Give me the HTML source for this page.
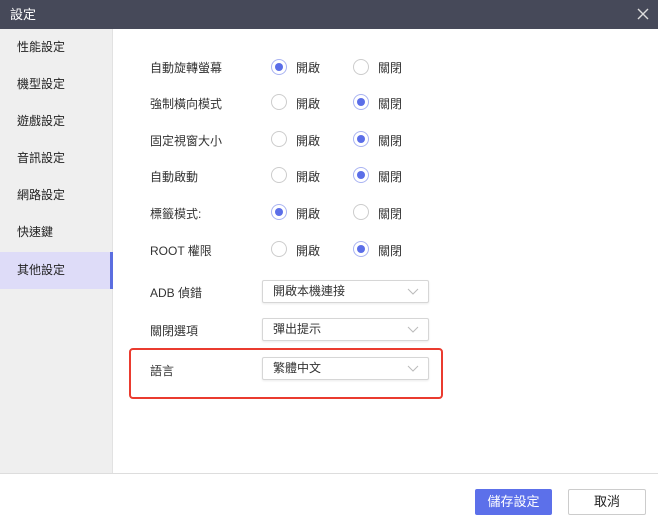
<!DOCTYPE html><html><head><meta charset="utf-8"><style>
*{box-sizing:border-box;margin:0;padding:0}
body{width:658px;height:523px;overflow:hidden;background:#fff;font-family:"Liberation Sans","Noto Sans CJK TC",sans-serif;font-size:12px;color:#333;position:relative}
.tb{position:absolute;left:0;top:0;width:658px;height:29px;background:#464959;color:#fff;font-size:13px;line-height:29px;padding-left:10px}
.x{position:absolute;right:8px;top:7px;width:14px;height:14px}
.sb{position:absolute;left:0;top:29px;width:113px;height:444px;background:#efefef;border-right:1px solid #e2e2e2}
.it{position:absolute;left:0;width:113px;height:37px;line-height:37px;padding-left:17px;font-size:12px;color:#222}
.act{background:#dedcf8;border-right:3px solid #5b6ee0}
.lb{position:absolute;left:150px;font-size:12px;color:#333}
.r{position:absolute;width:16px;height:16px;border-radius:50%;border:1px solid #ccc;background:#fff}
.r.on{border:1px solid #aab4f2}
.r.on::after{content:"";position:absolute;left:3px;top:3px;width:8px;height:8px;border-radius:50%;background:#5b6ee8}
.rt{position:absolute;font-size:12px;color:#333}
.sel{position:absolute;left:262px;width:167px;height:23px;border:1px solid #d6d6d6;border-radius:2px;background:#fff;line-height:21px;padding-left:10px;box-shadow:0 1px 2px rgba(0,0,0,.08)}
.sel svg{position:absolute;right:9px;top:7px}
.red{position:absolute;left:129px;top:348px;width:314px;height:51px;border:2px solid #ea3b2f;border-radius:4px}
.ft{position:absolute;left:0;top:473px;width:658px;height:50px;border-top:1px solid #ddd;background:#fff}
.b1{position:absolute;left:475px;top:489px;width:77px;height:26px;background:#5c70ea;color:#fff;border-radius:2px;text-align:center;line-height:26px;font-size:13px}
.b2{position:absolute;left:568px;top:489px;width:78px;height:26px;border:1px solid #ccc;border-radius:2px;text-align:center;line-height:24px;font-size:13px;color:#222;background:#fff}
</style></head><body>
<div class="tb">設定<svg class="x" viewBox="0 0 14 14"><path d="M2 2L12 12M12 2L2 12" stroke="#ddd" stroke-width="1.4"/></svg></div>
<div class="sb">
<div class="it" style="top:0">性能設定</div>
<div class="it" style="top:37px">機型設定</div>
<div class="it" style="top:74px">遊戲設定</div>
<div class="it" style="top:111px">音訊設定</div>
<div class="it" style="top:148px">網路設定</div>
<div class="it" style="top:185px">快速鍵</div>
<div class="it act" style="top:223px">其他設定</div>
</div>

<div class="lb" style="top:59px">自動旋轉螢幕</div>
<div class="r on" style="left:271px;top:59px"></div><div class="rt" style="left:296px;top:59px">開啟</div>
<div class="r" style="left:353px;top:59px"></div><div class="rt" style="left:378px;top:59px">關閉</div>

<div class="lb" style="top:95px">強制橫向模式</div>
<div class="r" style="left:271px;top:94px"></div><div class="rt" style="left:296px;top:95px">開啟</div>
<div class="r on" style="left:353px;top:94px"></div><div class="rt" style="left:378px;top:95px">關閉</div>

<div class="lb" style="top:132px">固定視窗大小</div>
<div class="r" style="left:271px;top:131px"></div><div class="rt" style="left:296px;top:132px">開啟</div>
<div class="r on" style="left:353px;top:131px"></div><div class="rt" style="left:378px;top:132px">關閉</div>

<div class="lb" style="top:168px">自動啟動</div>
<div class="r" style="left:271px;top:167px"></div><div class="rt" style="left:296px;top:168px">開啟</div>
<div class="r on" style="left:353px;top:167px"></div><div class="rt" style="left:378px;top:168px">關閉</div>

<div class="lb" style="top:205px">標籤模式:</div>
<div class="r on" style="left:271px;top:204px"></div><div class="rt" style="left:296px;top:205px">開啟</div>
<div class="r" style="left:353px;top:204px"></div><div class="rt" style="left:378px;top:205px">關閉</div>

<div class="lb" style="top:242px">ROOT 權限</div>
<div class="r" style="left:271px;top:241px"></div><div class="rt" style="left:296px;top:242px">開啟</div>
<div class="r on" style="left:353px;top:241px"></div><div class="rt" style="left:378px;top:242px">關閉</div>

<div class="lb" style="top:284px">ADB 偵錯</div>
<div class="sel" style="top:280px">開啟本機連接<svg width="12" height="8" viewBox="0 0 12 8"><path d="M1 1L6 6L11 1" stroke="#bbb" fill="none"/></svg></div>
<div class="lb" style="top:322px">關閉選項</div>
<div class="sel" style="top:318px">彈出提示<svg width="12" height="8" viewBox="0 0 12 8"><path d="M1 1L6 6L11 1" stroke="#bbb" fill="none"/></svg></div>
<div class="red"></div>
<div class="lb" style="top:362px">語言</div>
<div class="sel" style="top:357px">繁體中文<svg width="12" height="8" viewBox="0 0 12 8"><path d="M1 1L6 6L11 1" stroke="#bbb" fill="none"/></svg></div>

<div class="ft"></div>
<div class="b1">儲存設定</div>
<div class="b2">取消</div>
</body></html>
